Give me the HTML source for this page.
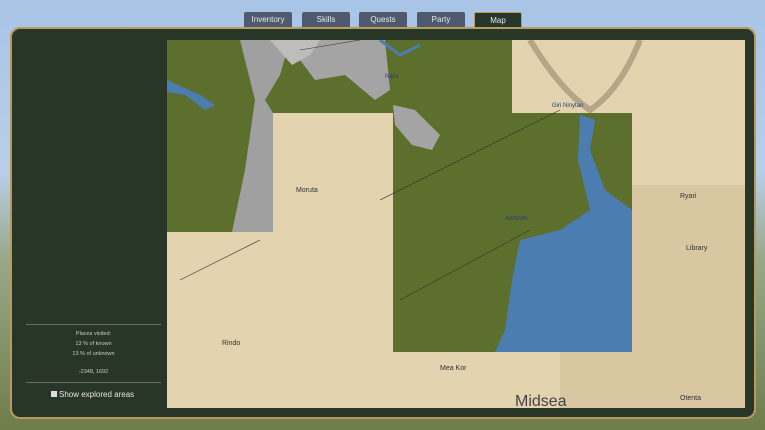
<!DOCTYPE html>
<html><head><meta charset="utf-8"><style>
*{margin:0;padding:0;box-sizing:border-box}
body{width:765px;height:430px;overflow:hidden;position:relative;font-family:"Liberation Sans",sans-serif;background:linear-gradient(#a8c4e6 0%,#b9cfe8 40%,#9aa88a 60%,#6f7d4a 100%)}
.tab{position:absolute;top:12px;height:15px;width:48px;background:#4f5a6e;color:#e6e8ee;font-size:8px;text-align:center;line-height:15px;border-radius:2px 2px 0 0}
.tab.on{background:#27362a;border:1px solid #b89a5e;border-bottom:none}
#panel{position:absolute;left:10px;top:27px;width:746px;height:392px;background:#283628;border:2px solid #b89a5e;border-radius:10px}
.txt{position:absolute;left:26px;width:135px;text-align:center;color:#c8cbbf;font-size:5.5px}
.hr{position:absolute;left:26px;width:135px;height:1px;background:#6a7060}
</style></head><body>
<div class="tab" style="left:244px">Inventory</div>
<div class="tab" style="left:302px">Skills</div>
<div class="tab" style="left:359px">Quests</div>
<div class="tab" style="left:417px">Party</div>
<div class="tab on" style="left:474px">Map</div>
<div id="panel"></div>
<div class="hr" style="top:324px"></div>
<div class="txt" style="top:331px">Places visited:</div>
<div class="txt" style="top:341px">13 % of known</div>
<div class="txt" style="top:351px">13 % of unknown</div>
<div class="txt" style="top:369px">-2348, 1692</div>
<div class="hr" style="top:382px"></div>
<div style="position:absolute;left:51px;top:390px;color:#e6e6dc;font-size:8px"><span style="display:inline-block;width:6px;height:6px;background:#ddd;margin-right:2px"></span>Show explored areas</div>
<svg style="position:absolute;left:167px;top:40px" width="578" height="368" viewBox="167 40 578 368">
<rect x="167" y="40" width="578" height="368" fill="#e3d3ae"/>
<rect x="560" y="185" width="185" height="223" fill="#d8c7a0"/>
<rect x="167" y="40" width="345" height="73" fill="#5c6f2c"/>
<rect x="167" y="113" width="106" height="119" fill="#5c6f2c"/>
<rect x="393" y="113" width="239" height="239" fill="#5c6f2c"/>
<path d="M240 40 L290 40 L280 75 L265 100 L273 113 L273 232 L232 232 L245 170 L255 100 Z" fill="#a0a0a0"/>
<path d="M300 40 L385 40 L390 90 L375 100 L345 75 L315 80 L300 60 Z" fill="#a4a4a4"/>
<path d="M393 105 L415 110 L440 135 L432 150 L412 145 L395 125 Z" fill="#a4a4a4"/>
<path d="M270 40 L320 40 L310 55 L292 65 Z" fill="#bdbdbd"/>
<path d="M580 115 L595 120 L590 150 L605 190 L632 210 L632 352 L495 352 L505 330 L512 280 L520 240 L560 230 L590 210 L578 160 Z" fill="#4b7db1"/>
<path d="M167 80 L200 95 L215 105 L205 110 L185 95 L167 92 Z" fill="#4b7db1"/>
<path d="M380 40 L400 55 L420 45" stroke="#4b7db1" stroke-width="3" fill="none"/>
<path d="M300 50 L360 40 M180 280 L260 240 M380 200 L560 110 M400 300 L530 230" stroke="#333" stroke-width="0.6" fill="none"/>
<path d="M530 40 Q560 90 590 110 Q620 90 640 40" stroke="#8a7860" stroke-width="6" fill="none" opacity="0.5"/>
<text x="385" y="78" font-size="6" fill="#1e3a8a">Naru</text>
<text x="552" y="107" font-size="6" fill="#1e3a8a">Giri Ninytan</text>
<text x="505" y="220" font-size="6" fill="#1e3a8a">Anmruhi</text>
<text x="296" y="192" font-size="7" fill="#333">Moruta</text>
<text x="680" y="198" font-size="7" fill="#333">Ryari</text>
<text x="686" y="250" font-size="7" fill="#333">Library</text>
<text x="222" y="345" font-size="7" fill="#333">Rindo</text>
<text x="440" y="370" font-size="7" fill="#333">Mea Kor</text>
<text x="515" y="406" font-size="16" fill="#444">Midsea</text>
<text x="680" y="400" font-size="7" fill="#333">Otenta</text>
</svg>
</body></html>
